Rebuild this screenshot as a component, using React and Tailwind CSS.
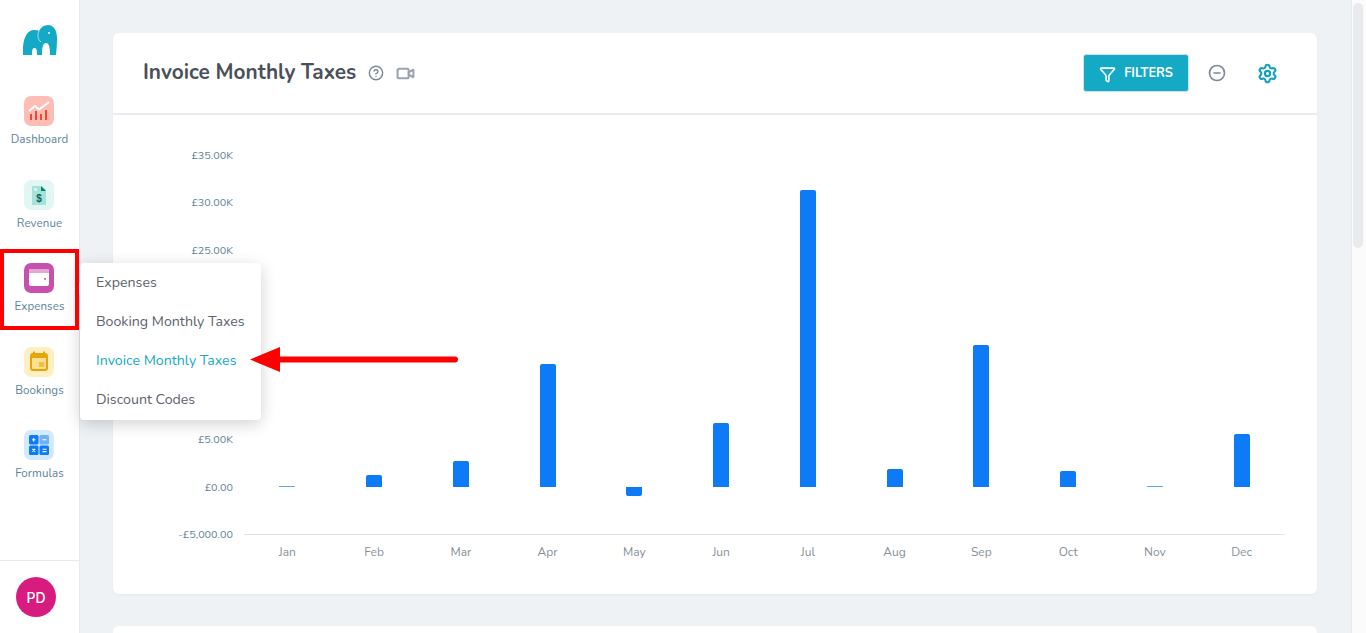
import React from 'react';
import { Filter, CircleMinus, Settings, CircleHelp, Video } from 'lucide-react';

const font = "font-['Nunito','Noto_Sans','Open_Sans',sans-serif]";

// three rungs of the axis sit behind the open flyout, so they stay blank
const yLabels = ['£35.00K', '£30.00K', '£25.00K', '', '', '', '£5.00K', '£0.00', '-£5,000.00'];

// up / down are heights in px from the zero line
const months = [
  { name: 'Jan', up: 1, down: 0 },
  { name: 'Feb', up: 12, down: 0 },
  { name: 'Mar', up: 26, down: 0 },
  { name: 'Apr', up: 123, down: 0 },
  { name: 'May', up: 0, down: 9 },
  { name: 'Jun', up: 64, down: 0 },
  { name: 'Jul', up: 297, down: 0 },
  { name: 'Aug', up: 18, down: 0 },
  { name: 'Sep', up: 142, down: 0 },
  { name: 'Oct', up: 16, down: 0 },
  { name: 'Nov', up: 1, down: 0 },
  { name: 'Dec', up: 53, down: 0 },
];

function DashboardIcon() {
  return (
    <svg viewBox="0 0 30 30" className="w-[30px] h-[30px]">
      <rect width="30" height="30" rx="7" fill="#fdbdb5" />
      <path d="M5 15l6-5 4 3.500L25 6" fill="none" stroke="#fff" strokeWidth="2" />
      <path d="M6 18h2v6H6zM11 15h2v9h-2zM16 18h2v6h-2zM21 14h2v10h-2z" fill="#f4452e" />
    </svg>
  );
}

function RevenueIcon() {
  return (
    <svg viewBox="0 0 30 30" className="w-[30px] h-[30px]">
      <rect width="30" height="30" rx="7" fill="#e2f6f4" />
      <path d="M8 6h10l4 4v15H8z" fill="#a5e2da" />
      <path d="M17 6l5 5h-5z" fill="#0e7f73" />
      <rect x="10" y="8" width="3" height="3" fill="#d6f2ee" />
      <text x="15" y="22" textAnchor="middle" fontSize="10" fontWeight="700" fill="#0b5f55" fontFamily="Liberation Sans, sans-serif">$</text>
    </svg>
  );
}

function ExpensesIcon() {
  return (
    <svg viewBox="0 0 30 30" className="w-[30px] h-[30px]">
      <rect width="30" height="30" rx="7" fill="#c74fae" />
      <rect x="5" y="6" width="20" height="17" rx="2" fill="#fff" />
      <path d="M5 8a2 2 0 0 1 2-2h16a2 2 0 0 1 2 2v2H5z" fill="#e3a6d5" />
      <circle cx="21" cy="16" r="1" fill="#c74fae" />
    </svg>
  );
}

function BookingsIcon() {
  return (
    <svg viewBox="0 0 30 30" className="w-[30px] h-[30px]">
      <rect width="30" height="30" rx="7" fill="#feefc3" />
      <rect x="7" y="7" width="16" height="16" rx="2" fill="#fbe08f" stroke="#e5a50a" strokeWidth="2" />
      <path d="M7 7h16v4H7z" fill="#e5a50a" />
      <path d="M10 4.500v4M20 4.500v4" stroke="#e5a50a" strokeWidth="2" />
      <rect x="15" y="15" width="5" height="5" fill="#efbe45" />
    </svg>
  );
}

function FormulasIcon() {
  return (
    <svg viewBox="0 0 30 30" className="w-[30px] h-[30px]">
      <rect width="30" height="30" rx="7" fill="#d3e9fd" />
      <rect x="5" y="5" width="9.500" height="9.500" rx="1.500" fill="#0d7bf2" />
      <rect x="15.500" y="5" width="9.500" height="9.500" rx="1.500" fill="#6fb0f7" />
      <rect x="5" y="15.500" width="9.500" height="9.500" rx="1.500" fill="#0d7bf2" />
      <rect x="15.500" y="15.500" width="9.500" height="9.500" rx="1.500" fill="#0d7bf2" />
      <path d="M8 9.700h3.500M9.700 8v3.500M18.500 9.700h4M8.400 18.900l2.800 2.800M11.200 18.900l-2.800 2.800M18.500 19.200h4M18.500 21.600h4" stroke="#fff" strokeWidth="1.100" />
    </svg>
  );
}

function Elephant() {
  return (
    <svg viewBox="0 0 34 30" className="w-[34px] h-[30px]">
      <path
        d="M0 30C-1 16 3 5 11 5c2 0 4 0 5 1 2-4 5-6 9-6 6 0 9 6 9 13 0 6-.5 12-1 17h-6c0-8-1-12-4-12s-4 4-4 12h-5c0-5-.5-7-2.500-7S9 25 9 30z"
        fill="#14a9c4"
      />
      <path d="M16 6c-2 4-1 9 2 11" fill="none" stroke="#fff" strokeWidth="0.600" />
      <circle cx="26" cy="8" r="0.900" fill="#fff" />
    </svg>
  );
}

function NavItem({ label, icon }) {
  return (
    <div className="flex flex-col items-center gap-[5px]">
      {icon}
      <span className="text-[11.5px] leading-[16px] tracking-[0.1px] text-[#5a7f9c]">{label}</span>
    </div>
  );
}

function Sidebar() {
  return (
    <aside className="w-[80px] h-full shrink-0 bg-white border-r border-[#e6eaef] flex flex-col items-center">
      <div className="pt-[25px] pb-[41px]"><Elephant /></div>
      <div className="flex flex-col gap-[32.5px]">
        <NavItem label="Dashboard" icon={<DashboardIcon />} />
        <NavItem label="Revenue" icon={<RevenueIcon />} />
        <NavItem label="Expenses" icon={<ExpensesIcon />} />
        <NavItem label="Bookings" icon={<BookingsIcon />} />
        <NavItem label="Formulas" icon={<FormulasIcon />} />
      </div>
      <div className="mt-auto w-full h-[73px] border-t border-[#e6eaef] flex items-center pl-[16px]">
        <div className="w-10 h-10 rounded-full bg-[#d81b7f] text-white text-[14px] font-medium font-['Inter',sans-serif] flex items-center justify-center">PD</div>
      </div>
    </aside>
  );
}

function Chart() {
  return (
    <div className="h-[479px] pt-[33px] pr-[32px] pl-[64px] flex">
      <div className="w-[56px] h-[395px] flex flex-col justify-between items-end text-[10.8px] leading-[16px] text-[#5f8295] shrink-0">
        {yLabels.map((l, i) => <span key={i} className="h-4 whitespace-nowrap">{l}</span>)}
      </div>
      <div className="flex-1 ml-[11px]">
        <div className="grid grid-cols-12 h-[380px] mt-[7px] border-b border-[#e0e3e7]">
          {months.map((m) => (
            <div key={m.name} className="flex flex-col items-center">
              <div className="h-[332px] w-[16px] flex items-end">
                <div className={`w-full ${m.up === 1 ? 'bg-[#5aa5f7]' : 'bg-[#0e7bf6] rounded-t-[2px]'}`} style={{ height: m.up }} />
              </div>
              {m.down > 0 && <div className="w-[16px] bg-[#0e7bf6] rounded-b-[2px]" style={{ height: m.down }} />}
            </div>
          ))}
        </div>
        <div className="grid grid-cols-12 mt-[9px] text-[12px] leading-[16px] text-[#878f98]">
          {months.map((m) => <span key={m.name} className="text-center">{m.name}</span>)}
        </div>
      </div>
    </div>
  );
}

export default function App() {
  return (
    <div className={`${font} relative flex w-[1366px] h-[633px] overflow-hidden bg-[#eef2f5]`}>
      <Sidebar />
      <main className="flex-1 min-w-0 px-[33px] pt-[33px]">
        <section className="w-[1204px] bg-white rounded-[6px] shadow-[0_1px_3px_rgba(0,0,0,0.04)]">
          <header className="h-[82px] border-b-2 border-[#e8ebf0] pl-[30px] pr-[39px] flex items-center">
            <h1 className="w-[213px] whitespace-nowrap text-[20.8px] font-bold text-[#4a5059] pb-[1px]">Invoice Monthly Taxes</h1>
            <CircleHelp className="ml-[12px] w-[16px] h-[16px] text-[#7e8a9a]" strokeWidth={2.2} />
            <Video className="ml-[12px] w-[19px] h-[19px] text-[#9aa3ae]" strokeWidth={2.6} />
            <button className="ml-auto w-[106px] h-[38px] pt-[2px] rounded-[3px] bg-[#14a9c4] border border-[#cfe3ea] text-white text-[12.8px] font-bold flex items-center justify-center gap-[8px]">
              <Filter className="w-[17px] h-[17px]" strokeWidth={2.2} />
              FILTERS
            </button>
            <CircleMinus className="ml-[19px] w-[18px] h-[18px] text-[#7e8a9a]" strokeWidth={2.2} />
            <Settings className="ml-[31px] w-[21px] h-[21px] text-[#14a0bd]" strokeWidth={2.4} />
          </header>
          <Chart />
        </section>
        <div className="w-[1204px] h-[40px] mt-[32px] bg-white rounded-[6px]" />
      </main>
      <div className="w-[15px] h-full shrink-0 bg-[#fbfbfc] border-l border-[#e6eaef] pl-[1px] pt-[3px]">
        <div className="w-[10px] h-[245px] bg-[#e8eaed] rounded-full" />
      </div>

      {/* flyout menu */}
      <div className="absolute left-[80px] top-[263px] w-[181px] h-[157px] bg-white rounded-[4px] shadow-[0_4px_16px_rgba(0,0,0,0.18)] text-[14.2px] text-[#5b626b] flex flex-col justify-center pl-[16px] pb-[2px]">
        <div className="absolute -left-[5px] top-[21px] w-[10px] h-[10px] rotate-45 bg-white" />
        <div className="h-[39px] leading-[39px]">Expenses</div>
        <div className="h-[39px] leading-[39px]">Booking Monthly Taxes</div>
        <div className="h-[39px] leading-[39px] text-[#14a9c4]">Invoice Monthly Taxes</div>
        <div className="h-[39px] leading-[39px]">Discount Codes</div>
      </div>

      {/* red highlight over the Expenses item */}
      <div className="absolute left-0 top-[249px] w-[79px] h-[81px] border-[4px] border-[#fe0000]" />

      {/* annotation arrow */}
      <svg viewBox="0 0 210 25" className="absolute left-[250px] top-[347px] w-[210px] h-[25px]">
        <path d="M0 12.500L30 0v9.500h175a3 3 0 0 1 0 6H30V25z" fill="#fe0000" />
      </svg>
    </div>
  );
}
